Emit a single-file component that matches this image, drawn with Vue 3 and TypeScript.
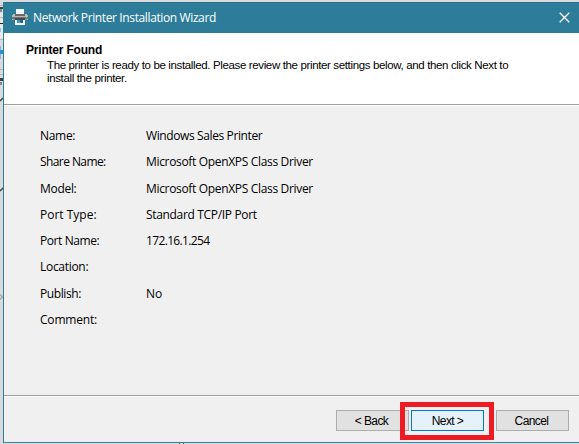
<script setup lang="ts">
interface Row { label: string; value: string; kind: string }
const rows: Row[] = [
  { label: 'Name:', value: 'Windows Sales Printer', kind: 'name' },
  { label: 'Share Name:', value: 'Microsoft OpenXPS Class Driver', kind: 'share' },
  { label: 'Model:', value: 'Microsoft OpenXPS Class Driver', kind: 'model' },
  { label: 'Port Type:', value: 'Standard TCP/IP Port', kind: 'port-type' },
  { label: 'Port Name:', value: '172.16.1.254', kind: 'port-name' },
  { label: 'Location:', value: '', kind: 'location' },
  { label: 'Publish:', value: 'No', kind: 'publish' },
  { label: 'Comment:', value: '', kind: 'comment' },
]
</script>

<template>
  <div class="desktop">
    <svg class="behind" width="579" height="444" shape-rendering="crispEdges">
      <path d="M0 13h3v27H0z" fill="#e9e9e9" />
      <path d="M0 5.5h3M0 17.5h3M0 39.5h3M0 69.5h3M0 74.5h3" stroke="#b5b5b5" />
      <path d="M0 7h3v2H0zM0 78h3v3H0z" fill="#444" />
      <path d="M0 9h2v3H0zM0 82h2v3H0z" fill="#7b8c94" />
      <path d="M0 23h3v1H0z" fill="#222" />
      <path d="M0 28h1v4H0z" fill="#8ac4e8" />
      <path d="M0 46h1v13H0z" fill="#7fb9e0" />
      <path d="M0 50h3v4H0z" fill="#2d8fd5" />
      <path d="M0 101l3-3M0 191l3-3" stroke="#444" stroke-width="1.5" shape-rendering="auto" />
      <path d="M0 294.5l2.5 2.5L0 299.5" fill="none" stroke="#aaa" stroke-width="1.5" shape-rendering="auto" />
      <path d="M179 443h1v1h-1zM183 443h1v1h-1z" fill="#555" />
    </svg>
    <main class="window">
      <header class="titlebar">
        <svg class="printer" width="16" height="16" viewBox="0 0 16 16" shape-rendering="crispEdges">
          <path d="M4 0h8v6H4z" fill="#f3f5f6" />
          <path d="M1 5h3v1h8V5h3v1h1v5H0V6h1z" fill="#b5b7b8" />
          <path d="M3 5h10v2H3z" fill="#686b6e" />
          <path d="M0 8h16v2H0z" fill="#717478" />
          <path d="M1 10h14v1H1z" fill="#8b8e91" />
          <path d="M3 9h10v2H3z" fill="#474b4e" />
          <path d="M14 8h1v1h-1z" fill="#92df60" />
          <path d="M3 11h10v5H3z" fill="#edf3f6" />
          <path d="M5 11h3v3H5z" fill="#359dc6" />
          <path d="M8 11h3v3H8z" fill="#24608a" />
          <path d="M7 13h2v1H7z" fill="#70a765" />
        </svg>
        <h1>Network Printer Installation Wizard</h1>
        <svg class="close" width="11" height="11" viewBox="0 0 11 11"><path d="M.7.7l9.6 9.6M10.3.7L.7 10.3" stroke="#fff" stroke-width="1.3" /></svg>
      </header>
      <section class="intro">
        <h2>Printer Found</h2>
        <p>The printer is ready to be installed. Please review the printer settings below, and then click Next to<br />install the printer.</p>
      </section>
      <dl class="details">
        <div v-for="row in rows" :key="row.label" class="row" :class="row.kind">
          <dt>{{ row.label }}</dt><dd>{{ row.value }}</dd>
        </div>
      </dl>
      <footer class="actions">
        <button type="button">&lt; Back</button>
        <div class="highlight"><button type="button" class="next">Next &gt;</button></div>
        <button type="button">Cancel</button>
      </footer>
    </main>
  </div>
</template>

<style>
body { overflow: hidden; }
</style>

<style scoped>
.desktop { position: relative; box-sizing: border-box; width: 579px; height: 444px; padding: 2px 0 1px 3px; background: #d9dadb; }
.behind { position: absolute; left: 0; top: 0; }
.window { position: relative; box-sizing: border-box; width: 576px; height: 441px; display: flex; flex-direction: column; border-left: 1px solid #2f7d99; border-bottom: 1px solid #2f88a3; background: #f0f0f0; color: #000; font-family: "Open Sans", sans-serif; font-size: 12px; }
.titlebar { flex: 0 0 31px; display: flex; align-items: center; box-sizing: border-box; border-top: 1px solid #286f8a; padding: 0 9px 2px 8px; background: #2d7d9a; color: #fff; }
h1 { margin: 1px 0 0 5px; font-size: 12px; font-weight: 400; line-height: 16px; letter-spacing: -.38px; white-space: nowrap; }
.close { margin: 0 0 0 auto; }
.intro { flex: 0 0 72px; box-sizing: border-box; padding: 10px 0 0 22px; background: #fff; border-bottom: 1px solid #a0a0a0; box-shadow: 0 1px #fff; font-family: "Liberation Sans", sans-serif; }
h2 { margin: 0; font-size: 12px; line-height: 14px; letter-spacing: -.2px; white-space: nowrap; }
.intro p { margin: 2px 0 0 21px; font-size: 11.5px; line-height: 13px; letter-spacing: -.36px; white-space: nowrap; }
.details { flex: 1; margin: 0; padding: 18px 0 0 36px; }
.row { display: grid; grid-template-columns: 106px 1fr; height: 26.3px; line-height: 26px; white-space: nowrap; }
dt { letter-spacing: -.3px; }
dd { margin: 0; letter-spacing: -.33px; }
.name dd { letter-spacing: -.39px; }
.share dt, .port-name dt { letter-spacing: -.5px; }
.share dt { letter-spacing: -.58px; }
.port-type dt { letter-spacing: 0; }
.port-name dt { letter-spacing: -.42px; }
.port-name dd { letter-spacing: -.65px; }
.publish dt { letter-spacing: -.4px; }
.publish dd { letter-spacing: -.15px; }
.comment dt { letter-spacing: -.2px; }
.actions { flex: 0 0 47px; box-sizing: border-box; border-top: 1px solid #a0a0a0; box-shadow: inset 0 1px #fff; display: flex; justify-content: flex-end; align-items: flex-start; padding: 6px 10px 0 0; }
button { box-sizing: border-box; width: 73px; height: 21px; margin: 8px 0 0; padding: 1px 2px 0 0; border: 1px solid #adadad; background: #e1e1e1; font-family: "Liberation Sans", sans-serif; font-size: 12px; line-height: 18px; letter-spacing: -.6px; color: #000; }
.highlight { box-sizing: border-box; width: 94px; height: 38px; margin: 0 2px 0 -9px; padding: 3px 5px; border: 5px solid #ed1c24; position: relative; }
.next { display: block; margin: 0 0 0 1px; padding-right: 0; border-color: #0078d7; background: #e5f1fb; }
</style>
